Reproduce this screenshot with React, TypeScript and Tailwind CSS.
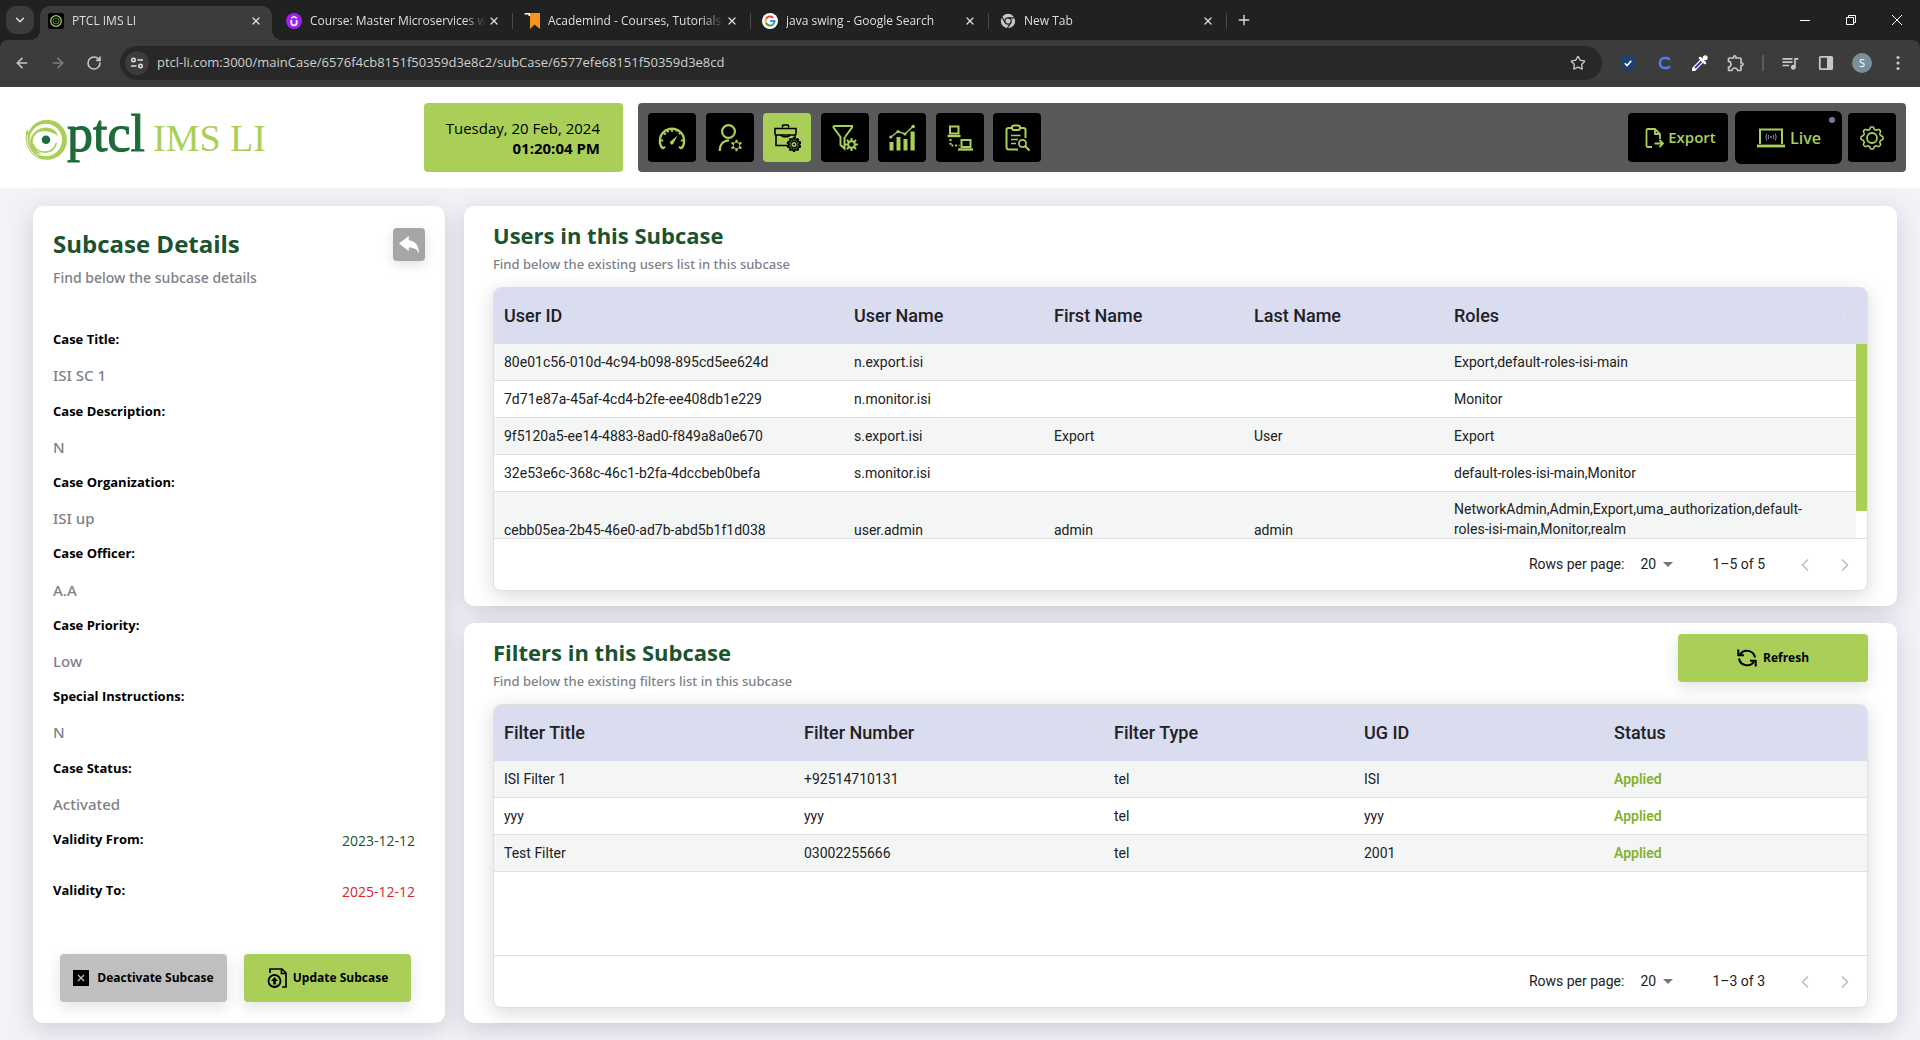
import React from "react";
import {
  ArrowLeft,
  ArrowRight,
  ChevronDown,
  ChevronLeft,
  ChevronRight,
  Plus,
  RotateCw,
  Star,
  X,
} from "lucide-react";
import { MdOutlineExtension, MdQueueMusic } from "react-icons/md";

/* ---------- drawing helpers ---------- */

function gearPath(cx: number, cy: number, r: number, depth: number, teeth: number) {
  const pts: string[] = [];
  for (let i = 0; i < 160; i++) {
    const a = (i / 160) * Math.PI * 2;
    const wave = Math.max(-1, Math.min(1, Math.cos(a * teeth) * 1.6));
    const rr = r + depth * wave;
    pts.push(`${(cx + rr * Math.sin(a)).toFixed(2)} ${(cy - rr * Math.cos(a)).toFixed(2)}`);
  }
  return `M${pts.join("L")}Z`;
}

type IconProps = { children: React.ReactNode; className?: string; box?: string };

function Icon({ children, className = "size-7", box = "0 0 28 28" }: IconProps) {
  return (
    <svg
      viewBox={box}
      className={className}
      fill="none"
      stroke="currentColor"
      strokeWidth="2"
      aria-hidden="true"
    >
      {children}
    </svg>
  );
}

const GaugeIcon = () => (
  <Icon>
    <path
      d="M4.5 24.5A12.2 12.2 0 1 1 23.5 24.5M4.5 24.5l2.6-1.6M23.5 24.5l-2.6-1.6M1.8 16.5h3.4M26.2 16.5h-3.4M5.3 8.2l2.5 2.3M14 4.5v3.2M22.700 8.200l-1.800 1.700M9 5.500l1.300 2.700M19 5.500l-.9 1.900"
      strokeWidth="2.2"
    />
    <path d="M19.500 11.500l-4.200 8.300a1.800 1.800 0 1 1-2.900-2.200z" fill="currentColor" stroke="none" />
  </Icon>
);

const UserGearIcon = () => (
  <Icon>
    <circle cx="12.500" cy="7.500" r="6.400" strokeWidth="2.200" />
    <path d="M3.700 27c0-6.500 3.500-10.500 9.300-10.700" strokeWidth="2.200" />
    <path
      d={`${gearPath(20.500, 21.500, 4.600, 1.100, 6)}M20.500 18.700a2.800 2.800 0 1 0 .01 0z`}
      fill="currentColor"
      fillRule="evenodd"
      stroke="none"
    />
  </Icon>
);

const CaseGearIcon = () => (
  <Icon>
    <g strokeWidth="1.600">
      <path d="M9.500 3.500V1.800q0-.8.800-.8h4.400q.8 0 .8.800v1.700" />
      <path d="M2 4.500h21v5.500q0 1-1 1H3q-1 0-1-1z" />
      <path d="M3 11v10.500h12M22 11v3" />
      <path d="M8 11c1 2.400 8 2.400 9 0" />
    </g>
    <path d={gearPath(21, 20.500, 5.700, 0.900, 10)} strokeWidth="1.700" />
    <circle cx="21" cy="20.500" r="3.100" strokeWidth="1.200" />
    <circle cx="21" cy="20.500" r="1" fill="currentColor" stroke="none" />
  </Icon>
);

const FilterGearIcon = () => (
  <Icon>
    <path d="M2.500 2h18.500v1.500L14 13M2.500 2v1.500L9.500 13v8l4 3.500V13" strokeWidth="2" />
    <path
      d={`${gearPath(20.500, 20.500, 5.400, 1.200, 8)}M20.500 18.200a2.300 2.300 0 1 0 .01 0z`}
      fill="currentColor"
      fillRule="evenodd"
      stroke="none"
    />
  </Icon>
);

const ChartIcon = () => (
  <Icon>
    <path d="M3 13l7-5.500 7 2.500 8.500-8" strokeWidth="1.400" />
    <g fill="currentColor" stroke="none">
      <circle cx="2.800" cy="13" r="1.600" />
      <circle cx="10" cy="7.500" r="1.600" />
      <circle cx="17" cy="10" r="1.600" />
      <circle cx="25.200" cy="2.500" r="1.800" />
      <path d="M1.500 18h4v8.500h-4zM8.500 13h4v13.500h-4zM15.500 15h4v11.500h-4zM22.500 7.500h4.200v19h-4.200z" />
    </g>
  </Icon>
);

const NetworkIcon = () => (
  <Icon>
    <rect x="4" y="2.500" width="8.500" height="7" />
    <path d="M1.500 12h13" strokeWidth="2.400" />
    <rect x="15.500" y="16" width="9" height="7" />
    <path d="M12 25.500h15" strokeWidth="2.400" />
    <path d="M4.500 15v6.500h9" strokeDasharray="2 1.700" strokeWidth="2.200" />
  </Icon>
);

const ClipboardIcon = () => (
  <Icon>
    <path d="M9 4H5.500Q3.500 4 3.500 6v17q0 2.500 2.500 2.500h9M17 4h3.500q2 0 2 2v8" />
    <rect x="9" y="1.500" width="8" height="4.500" rx="2" />
    <path d="M8 11.500h9.500M8 15.500h7M8 19.500h5" strokeWidth="1.700" />
    <circle cx="19.500" cy="19.500" r="3.600" strokeWidth="1.800" />
    <path d="M22 22l4.500 4.500" strokeWidth="2.200" />
  </Icon>
);

const NAV = [
  { label: "Dashboard", icon: <GaugeIcon />, active: false },
  { label: "Users", icon: <UserGearIcon />, active: false },
  { label: "Cases", icon: <CaseGearIcon />, active: true },
  { label: "Filters", icon: <FilterGearIcon />, active: false },
  { label: "Reports", icon: <ChartIcon />, active: false },
  { label: "Network", icon: <NetworkIcon />, active: false },
  { label: "Audit", icon: <ClipboardIcon />, active: false },
];

/* ---------- browser frame ---------- */

const PtclFavicon = () => (
  <svg viewBox="0 0 16 16" className="size-4 shrink-0" fill="none" aria-hidden="true">
    <rect width="16" height="16" rx="2" fill="#000" />
    <circle cx="8" cy="8" r="5.300" stroke="#a9cf58" strokeWidth="1.300" />
    <circle cx="8" cy="8" r="3" stroke="#5d8f3d" strokeWidth="1" />
    <circle cx="8" cy="8" r="1" fill="#2d6b45" />
  </svg>
);

const UdemyFavicon = () => (
  <svg viewBox="0 0 16 16" className="size-4 shrink-0" fill="none" aria-hidden="true">
    <circle cx="8" cy="8" r="8" fill="#a020f0" />
    <path d="M5.300 7v2.700a2.700 2.700 0 0 0 5.400 0V7" stroke="#fff" strokeWidth="1.800" />
    <path d="M5.200 5.200L8 3.500l2.800 1.700" stroke="#fff" strokeWidth="1.400" />
  </svg>
);

const BookmarkFavicon = () => (
  <svg viewBox="0 0 16 16" className="size-4 shrink-0" aria-hidden="true">
    <path d="M4 0h12v16l-5.500-4.500L6 16V3z" fill="#f7941e" />
    <path d="M0 1.500Q0 0 2 0h4v3H4.500V1.500z" fill="#fff" />
  </svg>
);

const GoogleFavicon = () => (
  <svg viewBox="0 0 16 16" className="size-4 shrink-0" fill="none" strokeWidth="2" aria-hidden="true">
    <circle cx="8" cy="8" r="8" fill="#fff" />
    <path d="M11.300 4.900A4.500 4.500 0 0 0 4 6" stroke="#ea4335" />
    <path d="M4 6a4.500 4.500 0 0 0 0 4" stroke="#fbbc05" />
    <path d="M4 10a4.500 4.500 0 0 0 7 1.400" stroke="#34a853" />
    <path d="M11 11.400A4.500 4.500 0 0 0 12.500 8H8.200" stroke="#4285f4" />
  </svg>
);

const ChromeFavicon = () => (
  <svg viewBox="0 0 16 16" className="size-4 shrink-0" fill="none" aria-hidden="true">
    <circle cx="8" cy="8" r="7.200" fill="#c4c7c5" />
    <circle cx="8" cy="8" r="3.200" stroke="#202121" strokeWidth="1.200" />
    <path d="M8 4.800h6.500M5.200 9.600L2 4M10.800 9.600L7.500 15" stroke="#202121" strokeWidth="1.200" />
  </svg>
);

const TABS = [
  { title: "PTCL IMS LI", icon: <PtclFavicon />, active: true },
  { title: "Course: Master Microservices w", icon: <UdemyFavicon />, active: false },
  { title: "Academind - Courses, Tutorials", icon: <BookmarkFavicon />, active: false },
  { title: "java swing - Google Search", icon: <GoogleFavicon />, active: false },
  { title: "New Tab", icon: <ChromeFavicon />, active: false },
];

function TabStrip() {
  return (
    <div className="flex h-10 items-end bg-[#202121] text-[#dedfde]">
      <button
        aria-label="Search tabs"
        className="mb-1.5 ml-1.5 flex size-7 items-center justify-center rounded-[10px] bg-[#3c3c3c]"
      >
        <ChevronDown className="size-3.5" strokeWidth={2.5} />
      </button>
      <div className="ml-1.5 flex">
        {TABS.map((t) => (
          <div key={t.title} className="flex h-[34px] w-[238px] items-center">
            <div
              className={
                t.active
                  ? "relative flex h-full w-[232px] items-center rounded-t-[10px] bg-[#3c3c3c] px-2 pb-[5px]"
                  : "flex h-full w-[232px] items-center px-2 pb-[5px]"
              }
            >
              {t.active && (
                <>
                  <span className="absolute bottom-0 -left-2.5 size-2.5 bg-[radial-gradient(circle_at_0_0,transparent_10px,#3c3c3c_10px)]" />
                  <span className="absolute bottom-0 -right-2.5 size-2.5 bg-[radial-gradient(circle_at_100%_0,transparent_10px,#3c3c3c_10px)]" />
                </>
              )}
              {t.icon}
              <span className="ml-2 w-44 overflow-hidden whitespace-nowrap text-[12px] leading-4 [mask-image:linear-gradient(90deg,#000_88%,transparent)]">
                {t.title}
              </span>
              <button aria-label={`Close ${t.title}`} className="flex size-4 shrink-0 items-center justify-center">
                <X className="size-3" strokeWidth={2.5} />
              </button>
            </div>
            {!t.active && <span className="mb-1 ml-0.5 h-4 w-px bg-[#4a4b4b]" />}
          </div>
        ))}
      </div>
      <button aria-label="New tab" className="mb-3 ml-1.5 flex size-4 items-center justify-center">
        <Plus className="size-4" />
      </button>
      <div className="ml-auto flex h-10 items-center text-white">
        <button aria-label="Minimize" className="flex h-10 w-[46px] items-center justify-center">
          <svg viewBox="0 0 10 10" className="size-2.5" aria-hidden="true">
            <path d="M0 5.500h10" stroke="currentColor" />
          </svg>
        </button>
        <button aria-label="Restore" className="flex h-10 w-[46px] items-center justify-center">
          <svg viewBox="0 0 10 10" className="size-2.5" fill="none" stroke="currentColor" aria-hidden="true">
            <path d="M.5 2.500h7v7h-7zM2.500 2.500v-2h7v7h-2" />
          </svg>
        </button>
        <button aria-label="Close window" className="flex h-10 w-[46px] items-center justify-center">
          <svg viewBox="0 0 10 10" className="size-2.5" stroke="currentColor" aria-hidden="true">
            <path d="M0 0l10 10M10 0L0 10" />
          </svg>
        </button>
      </div>
    </div>
  );
}

function ToolButton({ label, children }: { label: string; children: React.ReactNode }) {
  return (
    <button aria-label={label} className="flex size-9 shrink-0 items-center justify-center">
      {children}
    </button>
  );
}

function Toolbar() {
  return (
    <div className="bg-[#202121]">
      <div className="flex h-[47px] items-center rounded-t-lg bg-[#3c3c3c] px-1 pb-px text-[#c7c7c7]">
        <ToolButton label="Back">
          <ArrowLeft className="size-4" strokeWidth={2.4} />
        </ToolButton>
        <ToolButton label="Forward">
          <ArrowRight className="size-4 text-[#7d7d7d]" strokeWidth={2.4} />
        </ToolButton>
        <ToolButton label="Reload">
          <RotateCw className="size-4" strokeWidth={2.4} />
        </ToolButton>
        <div className="ml-2 flex h-[34px] flex-1 items-center rounded-full bg-[#282828] pl-[5px] pr-1.5">
          <button
            aria-label="Site information"
            className="flex size-6 items-center justify-center rounded-full bg-[#3c3c3c]"
          >
            <svg viewBox="0 0 14 14" className="size-3.5" fill="none" stroke="#dedede" strokeWidth="1.600" aria-hidden="true">
              <circle cx="3.500" cy="4" r="1.700" />
              <path d="M7.500 4H13M1 10h5.500" />
              <circle cx="10.500" cy="10" r="1.700" />
            </svg>
          </button>
          <input
            aria-label="Address"
            readOnly
            className="ml-2 min-w-0 flex-1 bg-transparent text-[13px] text-[#d0d0d0] outline-none"
            value="ptcl-li.com:3000/mainCase/6576f4cb8151f50359d3e8c2/subCase/6577efe68151f50359d3e8cd"
          />
          <ToolButton label="Bookmark">
            <Star className="size-4" strokeWidth={2} />
          </ToolButton>
        </div>
        <div className="ml-2 flex items-center">
          <ToolButton label="Shield extension">
            <svg viewBox="0 0 16 16" className="size-4" fill="none" aria-hidden="true">
              <path d="M8 0l7 2.500v5c0 4-3 7-7 8.500-4-1.500-7-4.500-7-8.500v-5z" fill="#1c4173" />
              <path d="M4.800 8.200l2.300 2.300 4.200-4.800" stroke="#fff" strokeWidth="1.600" />
            </svg>
          </ToolButton>
          <ToolButton label="C extension">
            <svg viewBox="0 0 16 16" className="size-4" fill="none" aria-hidden="true">
              <path d="M13 5.200V4.500Q13 3 10.500 3h-2Q4 3 4 8t4.500 5h2q2.500 0 2.500-1.500v-.7" stroke="#4a80f0" strokeWidth="2.400" />
            </svg>
          </ToolButton>
          <ToolButton label="Color picker">
            <svg viewBox="0 0 16 16" className="size-4" fill="none" aria-hidden="true">
              <path d="M10 6L3 13l-1.500 1.800" stroke="#fff" strokeWidth="4.200" strokeLinecap="round" />
              <path d="M9.500 6.500L3 13" stroke="#3030c8" strokeWidth="1.800" />
              <path d="M8 3l5 5M10.500 5.500l3-3" stroke="#fff" strokeWidth="2.500" strokeLinecap="round" />
              <circle cx="13.200" cy="2.800" r="2.500" fill="#fff" />
            </svg>
          </ToolButton>
          <ToolButton label="Extensions">
            <MdOutlineExtension className="size-5" />
          </ToolButton>
          <span className="mx-2 h-4 w-0.5 bg-[#5c5c5c]" />
          <ToolButton label="Media">
            <MdQueueMusic className="size-5" />
          </ToolButton>
          <ToolButton label="Side panel">
            <svg viewBox="0 0 16 16" className="size-4" aria-hidden="true">
              <rect x="1.800" y="1.800" width="12.400" height="12.400" rx=".8" fill="none" stroke="currentColor" strokeWidth="1.800" />
              <path d="M9 2h5v12H9z" fill="currentColor" />
            </svg>
          </ToolButton>
          <ToolButton label="Profile">
            <span className="flex size-5 items-center justify-center rounded-full bg-[#78909c] text-[11px] text-white">S</span>
          </ToolButton>
          <ToolButton label="Menu">
            <svg viewBox="0 0 4 16" className="h-4 w-1" fill="currentColor" aria-hidden="true">
              <circle cx="2" cy="2.500" r="1.600" />
              <circle cx="2" cy="8" r="1.600" />
              <circle cx="2" cy="13.500" r="1.600" />
            </svg>
          </ToolButton>
        </div>
      </div>
    </div>
  );
}

/* ---------- application header ---------- */

function Logo() {
  return (
    <div className="flex w-[391px] shrink-0 items-center pt-1 font-['Liberation_Serif',serif]">
      <svg viewBox="0 0 42 42" className="size-[42px] shrink-0" aria-hidden="true">
        <circle cx="22" cy="20.800" r="20" fill="#a9cf58" />
        <path d="M2 10C-2 22 3 37 18 41C9 36 3 28 4 14z" fill="#a9cf58" />
        <circle cx="20.800" cy="21" r="16.200" fill="#fff" />
        <path d="M2.500 16c-1.500 9 3 18 11 22" fill="none" stroke="#fff" strokeWidth=".8" />
        <path d="M33 17C31 8 19 6 11.500 11.500S3 27 9 32.500c3 2.300 6 2.500 8 2.300C10 32 6.800 26 8 20.500 9.500 12.500 20 8.500 33 17z" fill="#a9cf58" />
        <path d="M8 25c2 9 19 13 23.500-1" fill="none" stroke="#a9cf58" strokeWidth="1.600" />
        <circle cx="21" cy="20.800" r="4.300" fill="#1c6b38" />
      </svg>
      <div className="flex items-baseline pb-3">
        <span className="text-[52px] leading-[52px] text-[#1c6b38] [-webkit-text-stroke:1px_#1c6b38]">ptcl</span>
        <span className="ml-2 text-[38px] leading-[38px] text-[#a9cf58]">IMS LI</span>
      </div>
    </div>
  );
}

function Header() {
  return (
    <header className="flex h-[101px] items-center bg-white pl-[25px] pr-3.5">
      <Logo />
      <div className="ml-2 flex h-[69px] w-[199px] shrink-0 flex-col items-end justify-center rounded bg-[#a9cf58] pr-[23px] text-[15px] leading-5 text-black">
        <span>Tuesday, 20 Feb, 2024</span>
        <span className="font-bold">01:20:04 PM</span>
      </div>
      <nav className="ml-[15px] flex h-[69px] flex-1 items-center rounded bg-[#58595b] px-2.5">
        <div className="flex w-[393px] justify-between">
          {NAV.map((n) => (
            <button
              key={n.label}
              aria-label={n.label}
              className={
                n.active
                  ? "flex h-[49px] w-12 items-center justify-center rounded bg-[#a9cf58] text-black"
                  : "flex h-[49px] w-12 items-center justify-center rounded bg-black text-[#a9cf58]"
              }
            >
              {n.icon}
            </button>
          ))}
        </div>
        <div className="ml-auto flex items-center font-semibold text-[#a9cf58]">
          <button className="flex h-[49px] w-[100px] items-center justify-center gap-1 rounded bg-black pl-1 text-[15px]">
            <Icon className="size-5" box="0 0 20 20">
              <path d="M8 19H4q-1.500 0-1.500-1.500v-15Q2.500 1 4 1h7l5 5v5M11 1v5h5" strokeWidth="1.800" />
              <path d="M10.500 15.500h8M15.500 12l3.500 3.500-3.500 3.500" strokeWidth="1.800" />
            </Icon>
            Export
          </button>
          <button className="relative ml-[7px] flex h-[53px] w-[107px] items-center justify-center gap-1 rounded-md bg-black text-[16px]">
            <Icon className="h-5 w-[30px]" box="0 0 30 20">
              <path d="M4 16V1.500h22V16" />
              <path d="M1 18h28" strokeWidth="2.800" />
              <circle cx="15" cy="9" r="1" fill="#8a8aa8" stroke="none" />
              <path
                d="M12.800 6.800q-1.300 2.200 0 4.400M17.200 6.800q1.300 2.200 0 4.400M10.800 5.500q-2 3.500 0 7M19.200 5.500q2 3.500 0 7"
                stroke="#8a8aa8"
                strokeWidth="1"
              />
            </Icon>
            Live
            <span className="absolute right-[7px] top-1.5 size-1.5 rounded-full bg-[#7b7b93]" />
          </button>
          <button aria-label="Settings" className="ml-1.5 flex h-[49px] w-12 items-center justify-center rounded bg-black">
            <Icon className="size-6" box="0 0 24 24">
              <path d={gearPath(12, 12, 9.900, 1.100, 8)} strokeWidth="1.600" strokeLinejoin="round" />
              <circle cx="12" cy="12" r="5" strokeWidth="1.800" />
            </Icon>
          </button>
        </div>
      </nav>
    </header>
  );
}

/* ---------- subcase details ---------- */

const DETAILS = [
  ["Case Title:", "ISI SC 1"],
  ["Case Description:", "N"],
  ["Case Organization:", "ISI up"],
  ["Case Officer:", "A.A"],
  ["Case Priority:", "Low"],
  ["Special Instructions:", "N"],
  ["Case Status:", "Activated"],
];

function DetailsCard() {
  return (
    <aside className="flex w-[412px] shrink-0 flex-col rounded-[10px] bg-white px-5 pb-[21px] pt-[22px] shadow-[0_6px_24px_rgba(60,60,80,0.2)]">
      <div className="flex h-[94px] items-start justify-between">
        <div>
          <h1 className="text-[24px] font-bold leading-8 text-[#1b5230]">Subcase Details</h1>
          <p className="mt-2 font-['Noto_Sans',sans-serif] text-[14px] font-medium leading-5 text-[#7d8189]">
            Find below the subcase details
          </p>
        </div>
        <button
          aria-label="Back"
          className="flex h-[33px] w-8 items-center justify-center rounded bg-[#a6a6a6] shadow-[0_4px_12px_rgba(0,0,0,0.12)]"
        >
          <svg viewBox="0 0 20 20" className="size-5" fill="#fff" aria-hidden="true">
            <path d="M0 8.500L9.800 1v4.200c6.200.5 10.200 5 10.200 13.600-1.500-4.200-4.500-6.300-10.200-6.300v3.700z" />
          </svg>
        </button>
      </div>
      <dl className="grid flex-1 auto-rows-fr">
        {DETAILS.map(([label, value]) => (
          <React.Fragment key={label}>
            <dt className="flex items-center text-[13px] font-bold text-black">{label}</dt>
            <dd className="flex items-center font-['Noto_Sans',sans-serif] text-[15px] font-medium text-[#7d8189]">
              {value}
            </dd>
          </React.Fragment>
        ))}
      </dl>
      <dl className="flex flex-col gap-[15px] pr-2.5">
        <div className="flex h-9 items-center justify-between">
          <dt className="text-[13px] font-bold text-black">Validity From:</dt>
          <dd className="text-[14px] text-[#1b5230]">2023-12-12</dd>
        </div>
        <div className="flex h-9 items-center justify-between">
          <dt className="text-[13px] font-bold text-black">Validity To:</dt>
          <dd className="text-[14px] text-[#dc2036]">2025-12-12</dd>
        </div>
      </dl>
      <div className="mt-[45px] flex gap-[17px] pl-[7px] pr-3.5 text-[12px] font-bold text-black">
        <button className="flex h-12 flex-1 items-center justify-center gap-2 rounded bg-[#bfbfbf] shadow-[0_5px_15px_rgba(0,0,0,0.12)]">
          <svg viewBox="0 0 16 16" className="size-4" aria-hidden="true">
            <rect width="16" height="16" fill="#000" />
            <path d="M5 5l6 6M11 5l-6 6" stroke="#bfbfbf" strokeWidth="1.300" />
          </svg>
          Deactivate Subcase
        </button>
        <button className="flex h-12 flex-1 items-center justify-center gap-1.5 rounded bg-[#a9cf58] shadow-[0_5px_15px_rgba(0,0,0,0.12)]">
          <Icon className="size-5" box="0 0 20 20">
            <path d="M3 5V1h12l4 4v14h-4M14.500 1v4.500H19" strokeWidth="1.700" />
            <circle cx="7.500" cy="13" r="6" strokeWidth="1.800" />
            <path d="M7.500 9l3.500 4H8.800v3.500H6.200V13H4z" fill="currentColor" stroke="none" />
          </Icon>
          Update Subcase
        </button>
      </div>
    </aside>
  );
}

/* ---------- data grids ---------- */

type Column = { name: string; width: string };

function GridHead({ columns, lastSeparator }: { columns: Column[]; lastSeparator: string }) {
  return (
    <>
      <colgroup>
        {columns.map((c) => (
          <col key={c.name} className={c.width} />
        ))}
      </colgroup>
      <thead>
        <tr className="h-14 bg-[#dadcef]">
          {columns.map((c, i) => (
            <th key={c.name} scope="col" className="relative px-2.5 text-left text-[18px] font-medium text-[#202124]">
              {c.name}
              <span
                className={
                  i === columns.length - 1
                    ? `absolute top-[21px] h-3.5 w-0.5 bg-[#e0e0e0] ${lastSeparator}`
                    : "absolute right-0 top-[21px] h-3.5 w-0.5 bg-[#e0e0e0]"
                }
              />
            </th>
          ))}
        </tr>
      </thead>
    </>
  );
}

function GridFooter({ id, range }: { id: string; range: string }) {
  return (
    <div className="flex h-[52px] items-center justify-end border-t border-[#e0e0e0] pr-0.5 text-[14px] text-[#212121]">
      <label htmlFor={id}>Rows per page:</label>
      <div className="relative ml-2 mr-8 flex items-center">
        <select id={id} defaultValue="20" className="w-12 appearance-none bg-transparent pl-2 outline-none">
          <option value="20">20</option>
          <option value="50">50</option>
        </select>
        <svg viewBox="0 0 10 5" className="pointer-events-none absolute right-[7px] h-[5px] w-2.5" aria-hidden="true">
          <path d="M0 0h10L5 5z" fill="#757575" />
        </svg>
      </div>
      <span>{range}</span>
      <div className="ml-5 flex text-[#bdbdbd]">
        <button aria-label="Previous page" className="flex size-10 items-center justify-center">
          <ChevronLeft className="size-5" />
        </button>
        <button aria-label="Next page" className="flex size-10 items-center justify-center">
          <ChevronRight className="size-5" />
        </button>
      </div>
    </div>
  );
}

const USER_COLUMNS: Column[] = [
  { name: "User ID", width: "w-[350px]" },
  { name: "User Name", width: "w-[200px]" },
  { name: "First Name", width: "w-[200px]" },
  { name: "Last Name", width: "w-[200px]" },
  { name: "Roles", width: "w-auto" },
];

const USERS = [
  ["80e01c56-010d-4c94-b098-895cd5ee624d", "n.export.isi", "", "", "Export,default-roles-isi-main"],
  ["7d71e87a-45af-4cd4-b2fe-ee408db1e229", "n.monitor.isi", "", "", "Monitor"],
  ["9f5120a5-ee14-4883-8ad0-f849a8a0e670", "s.export.isi", "Export", "User", "Export"],
  ["32e53e6c-368c-46c1-b2fa-4dccbeb0befa", "s.monitor.isi", "", "", "default-roles-isi-main,Monitor"],
];

const LAST_USER = ["cebb05ea-2b45-46e0-ad7b-abd5b1f1d038", "user.admin", "admin", "admin"];

const FILTER_COLUMNS: Column[] = [
  { name: "Filter Title", width: "w-[300px]" },
  { name: "Filter Number", width: "w-[310px]" },
  { name: "Filter Type", width: "w-[250px]" },
  { name: "UG ID", width: "w-[250px]" },
  { name: "Status", width: "w-auto" },
];

const FILTERS = [
  ["ISI Filter 1", "+92514710131", "tel", "ISI"],
  ["yyy", "yyy", "tel", "yyy"],
  ["Test Filter", "03002255666", "tel", "2001"],
];

function GridFrame({ children }: { children: React.ReactNode }) {
  return (
    <div className="mt-[13px] overflow-hidden rounded-lg border border-[#e0e0e0] bg-white font-[Roboto,sans-serif] shadow-[0_5px_20px_rgba(0,0,0,0.15)]">
      {children}
    </div>
  );
}

function Card({ title, subtitle, action, children }: { title: string; subtitle: string; action?: React.ReactNode; children: React.ReactNode }) {
  return (
    <section className="rounded-[10px] bg-white px-[29px] pb-[15px] pt-[11px] shadow-[0_6px_24px_rgba(60,60,80,0.2)]">
      <div className="flex items-start justify-between">
        <div className="pt-0.5">
          <h2 className="text-[22px] font-bold leading-8 text-[#1b5230]">{title}</h2>
          <p className="mt-[3px] font-['Noto_Sans',sans-serif] text-[13px] font-medium leading-5 text-[#7d8189]">
            {subtitle}
          </p>
        </div>
        {action}
      </div>
      {children}
    </section>
  );
}

function UsersCard() {
  return (
    <Card title="Users in this Subcase" subtitle="Find below the existing users list in this subcase">
      <GridFrame>
        <div className="relative h-[250px] overflow-hidden">
          <table className="w-full table-fixed border-separate border-spacing-0 text-[14px] leading-5 text-[#212121]">
            <GridHead columns={USER_COLUMNS} lastSeparator="right-[22px]" />
            <tbody>
              {USERS.map((row) => (
                <tr key={row[0]} className="h-[37px] odd:bg-[#f4f6f5]">
                  {row.map((cell, i) => (
                    <td key={i} className="border-b border-[#e0e0e0] px-2.5">
                      {cell}
                    </td>
                  ))}
                </tr>
              ))}
              <tr className="h-[75px] bg-[#f4f6f5]">
                {LAST_USER.map((cell, i) => (
                  <td key={i} className="px-2.5">
                    {cell}
                  </td>
                ))}
                <td className="pl-2.5 pr-10 pt-[7px] align-top">
                  NetworkAdmin,Admin,Export,uma_authorization,default-roles-isi-main,Monitor,realm
                </td>
              </tr>
            </tbody>
          </table>
          <div className="absolute bottom-0 right-0 top-14 w-[11px] bg-white">
            <div className="h-[167px] bg-[#a9cf58]" />
          </div>
        </div>
        <GridFooter id="users-rows" range="1–5 of 5" />
      </GridFrame>
    </Card>
  );
}

function FiltersCard() {
  const refresh = (
    <button className="flex h-12 w-[190px] items-center justify-center gap-1.5 rounded bg-[#a9cf58] text-[12px] font-bold text-black shadow-[0_5px_15px_rgba(0,0,0,0.12)]">
      <Icon className="size-5" box="0 0 20 20">
        <path d="M3 6.500A8.200 8.200 0 0 1 18 9.500M17 13.500A8.200 8.200 0 0 1 2 10.500" strokeWidth="2" />
        <path d="M1.300 1.500V7.300H7M18.700 18.500V12.700H13" strokeWidth="2" />
      </Icon>
      Refresh
    </button>
  );
  return (
    <Card title="Filters in this Subcase" subtitle="Find below the existing filters list in this subcase" action={refresh}>
      <GridFrame>
        <div className="h-[250px]">
          <table className="w-full table-fixed border-separate border-spacing-0 text-[14px] leading-5 text-[#212121]">
            <GridHead columns={FILTER_COLUMNS} lastSeparator="right-3" />
            <tbody>
              {FILTERS.map((row) => (
                <tr key={row[0]} className="h-[37px] odd:bg-[#f4f6f5]">
                  {row.map((cell, i) => (
                    <td key={i} className="border-b border-[#e0e0e0] px-2.5">
                      {cell}
                    </td>
                  ))}
                  <td className="border-b border-[#e0e0e0] px-2.5 font-semibold text-[#86b02f]">Applied</td>
                </tr>
              ))}
            </tbody>
          </table>
        </div>
        <GridFooter id="filters-rows" range="1–3 of 3" />
      </GridFrame>
    </Card>
  );
}

export default function App() {
  return (
    <div className="flex min-h-screen flex-col bg-[#f2f3f8] font-['Open_Sans','Noto_Sans',sans-serif]">
      <TabStrip />
      <Toolbar />
      <Header />
      <main className="flex gap-[19px] pb-[17px] pl-[33px] pr-[23px] pt-[18px]">
        <DetailsCard />
        <div className="flex min-w-0 flex-1 flex-col gap-[17px]">
          <UsersCard />
          <FiltersCard />
        </div>
      </main>
    </div>
  );
}
